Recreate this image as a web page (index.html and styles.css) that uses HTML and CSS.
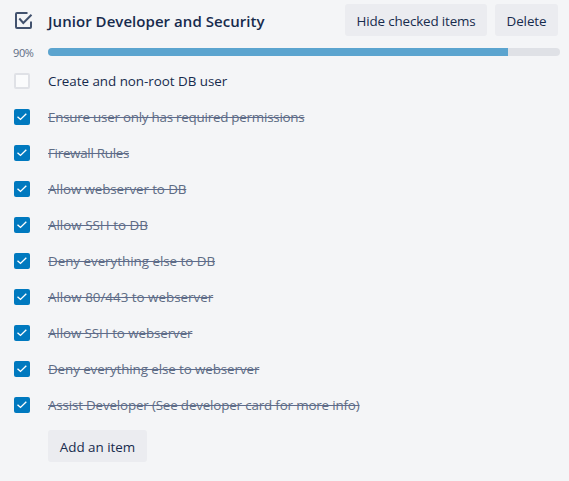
FILE: index.html
```
<!DOCTYPE html>
<html lang="en">
<head>
<meta charset="utf-8">
<title>Checklist</title>
<link rel="stylesheet" href="styles.css">
</head>
<body>
<svg class="defs" width="0" height="0" aria-hidden="true">
  <symbol id="tick" viewBox="0 0 16 16"><path d="M3.500 7.700 6.500 10.400 12.300 4.800" fill="none" stroke="#fff" stroke-width="1.400"/></symbol>
</svg>
<section class="checklist">
  <header class="header">
    <svg class="icon" viewBox="0 0 20 20" fill="none" stroke="#42526e" stroke-width="2">
      <path d="M14.500 3H4a1 1 0 0 0-1 1v13a1 1 0 0 0 1 1h13a1 1 0 0 0 1-1v-5.500"/>
      <path d="M6.300 8.500 10.300 13 18.500 4.700"/>
    </svg>
    <h3 class="title">Junior Developer and Security</h3>
    <button class="button hide">Hide checked items</button>
    <button class="button delete">Delete</button>
  </header>
  <div class="progress">
    <span class="percent">90%</span>
    <div class="bar"><div class="fill" style="width:89.9%"></div></div>
  </div>
  <ul class="items">
    <li class="item"><span class="box"></span><span class="text">Create and non-root DB user</span></li>
    <li class="item done tighter"><svg class="box"><use href="#tick"/></svg><span class="text">Ensure user only has required permissions</span></li>
    <li class="item done tightest"><svg class="box"><use href="#tick"/></svg><span class="text">Firewall Rules</span></li>
    <li class="item done tight"><svg class="box"><use href="#tick"/></svg><span class="text">Allow webserver to DB</span></li>
    <li class="item done loose"><svg class="box"><use href="#tick"/></svg><span class="text">Allow SSH to DB</span></li>
    <li class="item done"><svg class="box"><use href="#tick"/></svg><span class="text">Deny everything else to DB</span></li>
    <li class="item done loose"><svg class="box"><use href="#tick"/></svg><span class="text">Allow 80/443 to webserver</span></li>
    <li class="item done tight"><svg class="box"><use href="#tick"/></svg><span class="text">Allow SSH to webserver</span></li>
    <li class="item done tight"><svg class="box"><use href="#tick"/></svg><span class="text">Deny everything else to webserver</span></li>
    <li class="item done snug"><svg class="box"><use href="#tick"/></svg><span class="text">Assist Developer (See developer card for more info)</span></li>
  </ul>
  <button class="button add">Add an item</button>
</section>
</body>
</html>
```
FILE: styles.css
```
* { box-sizing: border-box; }
body {
  margin: 0;
  height: 481px;
  overflow: hidden;
  background: #f4f5f7;
  color: #172b4d;
  font: 13.4px/20px "Open Sans", "Noto Sans", sans-serif;
}
.defs { position: absolute; }
.checklist { padding-top: 4px; }
.header { display: flex; height: 32px; padding: 0 11px 0 13px; align-items: center; }
.icon { width: 20px; height: 20px; flex: none; margin: 0 15px 0 0; }
.title { margin: 2px auto 0 0; font-size: 15px; line-height: 20px; font-weight: 600; letter-spacing: 0.05px; white-space: nowrap; }
.button {
  height: 32px;
  padding: 2px 0 0;
  border: 0;
  border-radius: 3px;
  background: #ebecf0;
  color: #172b4d;
  font: inherit;
  text-align: center;
  white-space: nowrap;
}
.hide { width: 142px; margin-right: 8px; letter-spacing: -0.14px; }
.delete { width: 63px; letter-spacing: -0.1px; }
.progress { display: flex; height: 8px; margin: 12px 9px 0 13px; align-items: center; }
.percent { width: 35px; flex: none; padding-top: 2px; font-size: 11px; line-height: 10px; letter-spacing: -0.4px; color: #5e6c84; }
.bar { flex: 1; height: 8px; border-radius: 4px; overflow: hidden; background: #dfe1e6; }
.fill { height: 100%; background: #5ba4cf; }
.items { margin: 7px 0 0; padding: 0; list-style: none; }
.item { display: flex; height: 36px; padding-left: 14px; align-items: center; letter-spacing: -0.03px; }
.loose { letter-spacing: 0; }
.tight { letter-spacing: -0.1px; }
.snug { letter-spacing: -0.17px; }
.tighter { letter-spacing: -0.24px; }
.tightest { letter-spacing: -0.29px; }
.box { width: 16px; height: 16px; flex: none; margin-right: 18px; border: 2px solid #dfe1e6; border-radius: 2px; background: #fafbfc; }
.done .box { border: 0; background: #0079bf; }
.text { white-space: nowrap; }
.done .text { color: #5e6c84; text-decoration: line-through 1px #5e6c8c; }
.add { display: block; width: 99px; margin: 7px 0 0 48px; }
```
